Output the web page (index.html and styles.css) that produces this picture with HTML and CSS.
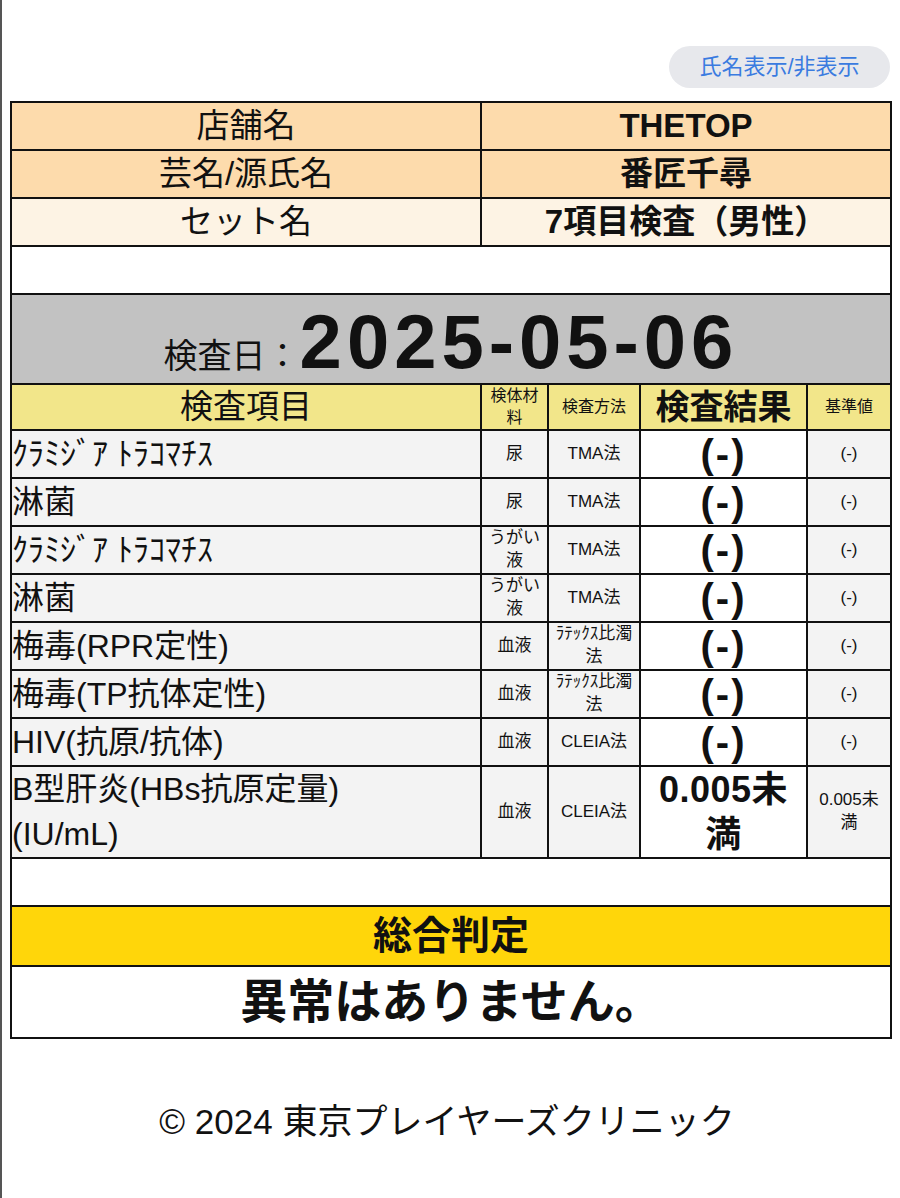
FILE: index.html
```html
<!DOCTYPE html>
<html lang="ja">
<head>
<meta charset="utf-8">
<link rel="stylesheet" href="styles.css">
</head>
<body>
<div class="page">
  <div class="toolbar">
    <button class="toggle">氏名表示/非表示</button>
  </div>
  <table class="report">
    <colgroup>
      <col class="c1"><col class="c2"><col class="c3"><col class="c4"><col class="c5">
    </colgroup>
    <tr class="info peach">
      <td class="label">店舗名</td>
      <td class="value" colspan="4">THETOP</td>
    </tr>
    <tr class="info peach">
      <td class="label">芸名/源氏名</td>
      <td class="value" colspan="4">番匠千尋</td>
    </tr>
    <tr class="info cream">
      <td class="label">セット名</td>
      <td class="value" colspan="4">7項目検査（男性）</td>
    </tr>
    <tr class="blank"><td colspan="5"></td></tr>
    <tr class="date">
      <td colspan="5"><span class="date-label">検査日：</span><span class="date-value">2025-05-06</span></td>
    </tr>
    <tr class="head">
      <td class="h-big">検査項目</td>
      <td class="h-small">検体材料</td>
      <td class="h-small">検査方法</td>
      <td class="h-big bold">検査結果</td>
      <td class="h-small">基準値</td>
    </tr>
    <tr class="row">
      <td class="item">ｸﾗﾐｼﾞｱ ﾄﾗｺﾏﾁｽ</td><td class="sm">尿</td><td class="sm">TMA法</td><td class="res">(-)</td><td class="sm">(-)</td>
    </tr>
    <tr class="row">
      <td class="item">淋菌</td><td class="sm">尿</td><td class="sm">TMA法</td><td class="res">(-)</td><td class="sm">(-)</td>
    </tr>
    <tr class="row">
      <td class="item">ｸﾗﾐｼﾞｱ ﾄﾗｺﾏﾁｽ</td><td class="sm">うがい液</td><td class="sm">TMA法</td><td class="res">(-)</td><td class="sm">(-)</td>
    </tr>
    <tr class="row">
      <td class="item">淋菌</td><td class="sm">うがい液</td><td class="sm">TMA法</td><td class="res">(-)</td><td class="sm">(-)</td>
    </tr>
    <tr class="row">
      <td class="item">梅毒(RPR定性)</td><td class="sm">血液</td><td class="sm">ﾗﾃｯｸｽ比濁法</td><td class="res">(-)</td><td class="sm">(-)</td>
    </tr>
    <tr class="row">
      <td class="item">梅毒(TP抗体定性)</td><td class="sm">血液</td><td class="sm">ﾗﾃｯｸｽ比濁法</td><td class="res">(-)</td><td class="sm">(-)</td>
    </tr>
    <tr class="row">
      <td class="item">HIV(抗原/抗体)</td><td class="sm">血液</td><td class="sm">CLEIA法</td><td class="res">(-)</td><td class="sm">(-)</td>
    </tr>
    <tr class="row tall">
      <td class="item">B型肝炎(HBs抗原定量)<br>(IU/mL)</td><td class="sm">血液</td><td class="sm">CLEIA法</td><td class="res num">0.005未満</td><td class="sm">0.005未満</td>
    </tr>
    <tr class="blank"><td colspan="5"></td></tr>
    <tr class="verdict-head"><td colspan="5">総合判定</td></tr>
    <tr class="verdict"><td colspan="5">異常はありません。</td></tr>
  </table>
  <footer class="footer">© 2024 東京プレイヤーズクリニック</footer>
</div>
</body>
</html>
```

FILE: styles.css
```css
html, body {
  margin: 0;
  padding: 0;
  background: #ffffff;
}
body {
  font-family: "Liberation Sans", "Noto Sans CJK JP", sans-serif;
  color: #111;
  border-left: 2px solid #555;
  min-height: 1198px;
  box-sizing: border-box;
  line-height: 1.2;
}
.page {
  padding: 0 8px 0 8px;
}
.toolbar {
  display: flex;
  justify-content: flex-end;
  padding-top: 46px;
  padding-bottom: 13px;
  padding-right: 2px;
}
.toggle {
  font-family: "Liberation Sans", "Noto Sans CJK JP", sans-serif;
  font-size: 22px;
  color: #3a7be0;
  background: #e7e8ec;
  border: none;
  border-radius: 21px;
  height: 42px;
  width: 221px;
  padding: 0;
  line-height: 42px;
}
.report {
  width: 880px;
  border-collapse: collapse;
  table-layout: fixed;
  border: 2px solid #111;
}
.c1 { width: 470px; }
.c2 { width: 67px; }
.c3 { width: 92px; }
.c4 { width: 167px; }
.c5 { width: 84px; }
.report td {
  border: 2px solid #111;
  padding: 0;
  text-align: center;
  vertical-align: middle;
}
.info td {
  height: 46px;
  font-size: 33px;
  line-height: 1.2;
}
.peach td { background: #fddbac; }
.cream td { background: #fdf3e4; }
.info .value {
  font-weight: bold;
}
.blank td {
  height: 46px;
  background: #fff;
}
.date td {
  height: 82px;
  background: #c2c2c2;
  padding-top: 6px;
  line-height: 1;
}
.date-label {
  font-size: 34px;
}
.date-value {
  font-size: 76px;
  font-weight: bold;
  letter-spacing: 5px;
  line-height: 1;
}
.head td {
  background: #f2e68a;
  height: 44px;
}
.h-big {
  font-size: 33px;
  line-height: 1.2;
}
.h-big.bold { font-weight: bold; font-size: 34px; }
.h-small {
  font-size: 16px;
  line-height: 1.35;
  padding: 0 4px !important;
}
.row td {
  height: 46px;
  background: #f3f3f3;
}
.row .item {
  text-align: left;
  font-size: 32px;
  line-height: 1.4;
  padding-left: 0;
}
.row .sm {
  font-size: 17px;
  line-height: 1.35;
  padding: 0 4px;
}
.row .res {
  background: #fff;
  font-size: 40px;
  font-weight: bold;
  letter-spacing: 2px;
  line-height: 1.1;
  padding: 0 6px;
}
.row .res.num {
  font-size: 36px;
  letter-spacing: 0.5px;
  line-height: 1.25;
}
.row.tall td { height: 90px; }
.verdict-head td {
  background: #ffd60a;
  height: 58px;
  font-size: 39px;
  font-weight: bold;
}
.verdict td {
  background: #fff;
  height: 70px;
  font-size: 47px;
  font-weight: bold;
}
.footer {
  text-align: center;
  font-size: 35px;
  padding-top: 62px;
  padding-right: 8px;
}
```
